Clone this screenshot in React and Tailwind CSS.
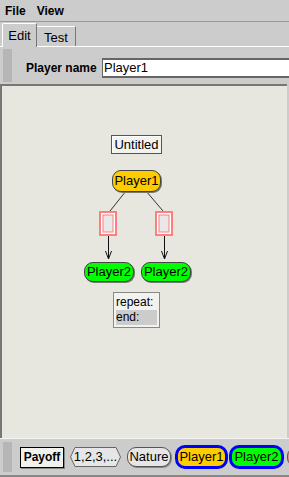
import React from 'react';

const font = { fontFamily: '"Liberation Sans", Arial, sans-serif' };

function Grip() {
  return (
    <div
      className="w-[9px] self-stretch shrink-0"
      style={{
        backgroundImage:
          'radial-gradient(circle, #9a9a9a 0.6px, transparent 0.8px)',
        backgroundSize: '2px 2px',
      }}
    />
  );
}

function Pill({ children, color, className = '' }) {
  return (
    <div
      className={`absolute flex items-center justify-center rounded-[9px] border border-[#444] text-[13px] text-black shadow-[1px_1px_0_#777] ${className}`}
      style={{ backgroundColor: color }}
    >
      {children}
    </div>
  );
}

function Canvas() {
  return (
    <div className="relative flex-1 border-l-2 border-t-2 border-[#777] bg-[#e7e6df] mr-[2px]">
      <svg className="absolute left-0 top-0" width="287" height="352" viewBox="0 0 287 352">
        <g transform="translate(-2,-88)">
          <line x1="126" y1="193" x2="110" y2="213" stroke="#333" />
          <line x1="146" y1="193" x2="163" y2="213" stroke="#333" />
          {[99, 155].map((x) => (
            <g key={x}>
              <rect x={x + 1} y="214" width="16" height="23" fill="#fff" stroke="#ff7f7f" strokeWidth="2" />
              <rect x={x + 4} y="217" width="10" height="17" fill="#e8e8e8" stroke="#ff7f7f" strokeWidth="1" />
              <line x1={x + 9.5} y1="238" x2={x + 9.5} y2="260" stroke="#111" />
              <path d={`M${x + 6.5} 253 L${x + 9.5} 261 L${x + 12.5} 253`} fill="none" stroke="#111" />
            </g>
          ))}
        </g>
      </svg>
      <div className="absolute left-[109px] top-[49px] h-[19px] w-[51px] border border-[#555] bg-[#f2f2ee] shadow-[inset_1px_1px_0_#fff] flex items-center justify-center text-[13px]">
        Untitled
      </div>
      <Pill color="#ffcc00" className="left-[110px] top-[84px] h-[22px] w-[49px]">Player1</Pill>
      <Pill color="#00ff00" className="left-[82px] top-[176px] h-[20px] w-[50px]">Player2</Pill>
      <Pill color="#00ff00" className="left-[139px] top-[176px] h-[20px] w-[50px]">Player2</Pill>
      <div className="absolute left-[111px] top-[206px] w-[47px] border border-[#888] bg-[#f2f2ee] p-[2px] text-[12px] leading-[15px]">
        <div>repeat:</div>
        <div className="bg-[#cccccc]">end:</div>
      </div>
    </div>
  );
}

export default function App() {
  return (
    <div className="w-[289px] h-[477px] overflow-hidden flex flex-col bg-[#cccccc] text-black" style={font}>
      <div className="h-[22px] flex items-center gap-[11px] px-[5px] text-[12px] font-bold border-b border-[#999]">
        <span>File</span>
        <span>View</span>
      </div>
      <div className="h-[25px] flex items-end pl-[2px] border-b border-white">
        <div className="h-[24px] w-[35px] border-l border-t border-white border-r border-r-[#777] rounded-tl-[2px] flex items-center justify-center text-[13px] -mb-px bg-[#cccccc] relative z-10">
          Edit
        </div>
        <div className="h-[20px] w-[39px] border-t border-white border-r border-r-[#777] flex items-center justify-center text-[13px] pt-[2px]">
          Test
        </div>
      </div>
      <div className="h-[37px] flex items-stretch py-[2px] pl-[3px] gap-[14px]">
        <Grip />
        <div className="flex items-center gap-[4px] flex-1 pt-[4px]">
          <span className="text-[12px] font-bold w-[72px] whitespace-nowrap">Player name</span>
          <div className="flex-1 h-[20px] bg-white border-t-2 border-b-2 border-l border-[#666] text-[13px] flex items-center pl-[1px]">
            Player1
          </div>
        </div>
      </div>
      <Canvas />
      <div className="h-[39px] flex items-center pl-[3px] border-t border-[#f4f4f4] border-b-2 border-b-[#888]">
        <div className="h-[30px] flex items-center">
          <Grip />
        </div>
        <div className="ml-[8px] h-[21px] w-[44px] shrink-0 border border-black bg-[#f0f0ec] shadow-[1px_1px_0_#888] flex items-center justify-center text-[12px] font-bold">
          Payoff
        </div>
        <div className="ml-[6px] relative h-[20px] w-[51px] shrink-0 flex items-center justify-center text-[13px]">
          <svg className="absolute inset-0" width="51" height="20" viewBox="0 0 51 20">
            <path d="M5 0.5 H46 L50.5 10 L46 19.5 H5 L0.5 10 Z" fill="#e6e6e6" stroke="#666" />
          </svg>
          <span className="relative">1,2,3,...</span>
        </div>
        <div className="ml-[6px] h-[20px] w-[44px] shrink-0 rounded-[9px] border border-[#555] bg-[#e6e6e6] shadow-[1px_1px_0_#888] flex items-center justify-center text-[13px]">
          Nature
        </div>
        <div className="ml-[4px] h-[24px] w-[53px] shrink-0 rounded-[10px] border-[3px] border-[#0000ff] bg-[#ffcc00] flex items-center justify-center text-[13px]">
          Player1
        </div>
        <div className="ml-[1px] h-[24px] w-[55px] shrink-0 rounded-[10px] border-[3px] border-[#0000ff] bg-[#00ff00] flex items-center justify-center text-[13px]">
          Player2
        </div>
        <div className="ml-[3px] h-[20px] w-[20px] shrink-0 rounded-[9px] border border-[#555] bg-[#e89090]" />
      </div>
    </div>
  );
}
